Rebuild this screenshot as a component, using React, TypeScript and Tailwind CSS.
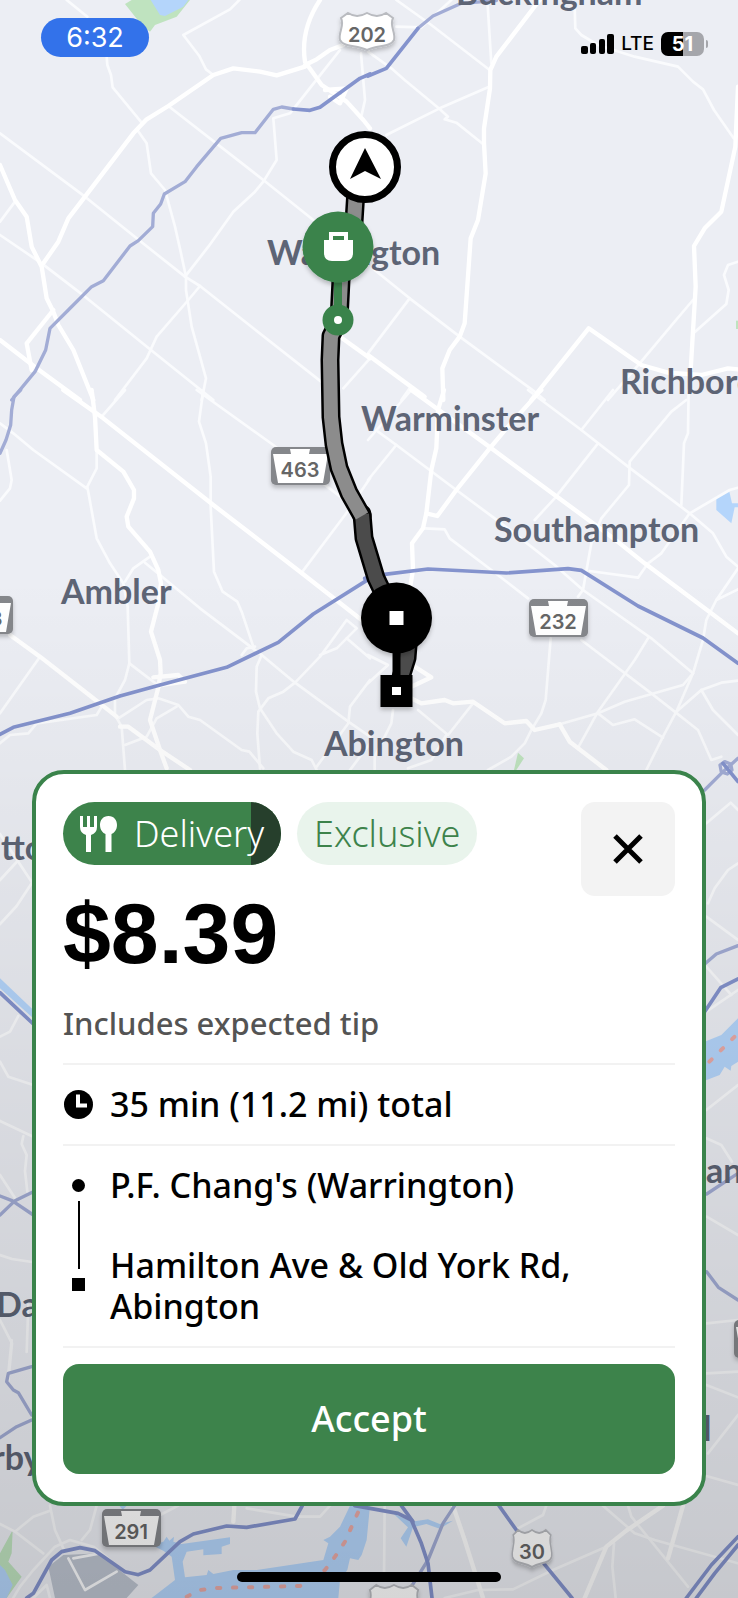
import React from 'react';

type Tile = {
  x: number;
  y: number;
  parks?: string[];
  water?: string[];
  grey?: string[];
  minor?: string[];
  major?: string[];
  highway?: string[];
  highwayDark?: string[];
  ferry?: string[];
};

// Map geometry, three units per screen pixel inside every tile
const TILES: Tile[] = [
  {
    x: 0,
    y: 0,
    parks: ['M375 12L395 0L570 0L530 50L465 75L450 95L425 75Z'],
    water: ['M452 0L480 45L495 48L550 20L565 0Z'],
    minor: [
      'M200 0L262 50',
      'M320 170L322 195L333 225L338 262L425 368M412 390L440 430L453 520L495 570L525 680L543 760L558 830L558 870L575 980L600 1070L618 1135L605 1200',
      'M718 0L690 28L550 105L598 168L618 208L640 225',
      'M505 318L790 540L940 660',
      'M1020 150L945 245L870 340L820 355L830 480L790 545L765 575L700 635L625 740L555 830',
      'M0 400L255 590L410 715L555 830L600 858L760 985L970 1150',
      'M0 705L125 790L255 890L450 1048L640 1200',
      'M0 665L45 605',
      'M600 858L565 900L470 1010L440 1075L345 1200',
      'M1110 1075L1030 1165',
      'M1083 160L1095 300L1085 345',
    ],
    major: [
      'M915 200L830 226L780 215L700 205L640 225L505 318L440 358L400 400L345 472L255 590L205 655L175 725L130 790',
      'M960 0C920 60 905 120 915 185L965 255L1040 305L1090 360L1110 385',
      'M915 195L950 178L990 150L1030 135',
      'M0 495L45 600L80 650L95 740L125 800L140 895L160 935L175 975L220 1050L280 1200',
      'M160 930L80 1030L95 1110',
      'M0 1020L110 1105L240 1200',
      'M1020 1010L1110 1075',
      'M975 270L1040 265L1020 310L990 290',
    ],
    highway: [
      'M35 1200L105 1115L137 1050L150 985L205 930L275 860L310 842L390 738L415 722L458 680L460 640L482 612L493 582L555 545L590 500L662 415L725 398L765 398L820 328L845 321L880 327',
    ],
    highwayDark: ['M880 327L930 331L960 322L1080 235L1110 222'],
  },
  {
    x: 368,
    y: 0,
    parks: ['M1104 962h6v25h-6z'],
    minor: [
      'M85 0L190 75L365 210',
      'M85 80L160 82L250 0',
      'M0 155L70 205L110 240L215 327L240 350L230 358L265 368L345 432',
      'M55 405L215 325L360 262',
      'M358 0L370 190',
      'M620 20L622 85L640 105L690 135L800 170L930 200L975 245L1005 268L1038 330L1097 415',
      'M1110 785L1080 795L1068 825L1082 870L1075 912L978 998',
      'M975 900L920 965L815 1090L720 1200',
      'M20 810L125 895L275 1010L500 1175L530 1200',
      'M125 895L0 1060',
      'M125 1165L100 1200',
    ],
    major: [
      'M515 0L385 170L367 210L366 265L348 385L348 430L353 520L330 660L308 715L290 970L275 1010L245 1050L223 1105L226 1200',
      'M1110 260L1102 440L1060 635L1010 685L978 738L983 860L968 1110',
      'M0 1065L170 1190',
      'M490 1200L662 985L820 1095L900 1118L1000 1125L1080 1105L1110 1108',
    ],
    highway: ['M150 85L195 48L280 10L385 2'],
    highwayDark: ['M0 228L55 205L150 85'],
  },
  {
    x: 0,
    y: 390,
    minor: [
      'M305 80L375 0',
      'M0 100L40 130L100 180L260 295',
      'M290 180L290 235L262 290L290 445L330 520L370 580L383 650L388 820L375 870L345 925L345 975',
      'M20 180L35 270L30 295L0 332',
      'M610 0L597 95L618 160L632 260L632 350L642 545L668 605L712 635L725 665L760 770',
      'M590 0L820 165L1040 335',
      'M450 500L400 535L375 575',
      'M435 518L480 555L600 655L785 795L885 878L1045 995L1110 1040',
      'M905 548L1035 375L1110 265',
      'M120 800L0 970',
      'M0 1060L30 1035L85 1030L110 1000L290 975L305 950',
      'M388 820L440 860L480 890',
      'M355 985L440 930L475 925L535 945L565 980L600 990L725 1080L748 1085L790 1135',
      'M345 975L365 1010L375 1140',
      'M375 1065L440 1040L470 985L530 950',
      'M785 795L770 830L768 905L780 955L830 1030L880 1085L935 1110L950 1140',
      'M780 1135L772 1030L775 965L805 925L850 905L885 878L960 800L1040 690L1070 715L1010 775L960 795',
      'M1040 745L1110 805',
      'M1110 870L1050 950L1045 1000L950 1130',
      'M1050 1140L1110 1060',
      'M725 795L740 775L765 770',
    ],
    major: [
      'M275 0L285 80L290 180L370 245L402 300L402 325L380 380L385 410L450 485L475 540L483 580L475 640L453 725L480 810L482 850L473 900L450 990L480 1080L500 1135',
      'M190 0L310 85L640 345L900 545L1085 690',
      'M30 735L120 800L280 925L350 980',
      'M360 1010L385 1010L480 1080L570 1140',
      'M460 862L535 855L555 875L480 885',
    ],
    highway: ['M62 0L42 20L35 60L32 105L18 150L0 190'],
    highwayDark: ['M0 1033L40 1012L210 970L360 918L480 885L680 832L835 757L940 672L1110 565'],
  },
  {
    x: 368,
    y: 390,
    parks: ['M450 1088L468 1105L445 1140L438 1140Z'],
    water: ['M1045 320L1083 300L1092 340L1110 340V352L1100 352L1090 400L1045 360Z'],
    minor: [
      'M480 0L640 120L780 230L965 370L1035 430L1075 500L1110 530',
      'M130 0L0 150',
      'M735 0L640 120',
      'M690 160L560 325L500 390',
      'M0 270L85 165',
      'M30 125L85 165L265 300L400 400L560 525L645 600L850 745L975 850',
      'M170 415L230 418L245 445L370 540L480 625',
      'M955 30L910 65L785 215L783 285L700 385L670 460L645 600L630 620',
      'M962 0L960 130L948 160L940 345',
      'M965 370L1085 300L1110 293',
      'M965 370L880 490L840 520L810 563L665 543',
      'M1110 535L1045 630L1110 598',
      'M1045 630L1015 690L1005 750L975 850L925 965L885 1040L835 1140',
      'M840 745L800 810L690 965L632 1070',
      'M640 750L850 910L920 965L990 1020L1030 1110L1060 1100',
      'M548 745L533 930L520 970L490 1020L470 1060L430 1100L360 1140',
      'M575 1003L690 970L770 935L945 885L975 850',
      'M690 970L735 1005L800 988L885 1043',
      'M925 965L1000 900L1060 878L1110 872',
      'M1000 900L1035 960L1110 1035',
      'M150 960L240 1035L315 940',
      'M75 960L70 1000L20 1100V1140',
      'M235 1035L190 1110L120 1135',
      'M0 795L60 825L0 880',
    ],
    major: [
      'M130 0L370 175L560 315L730 440L830 520L1030 670L1110 730',
      'M228 0L210 60L205 175L190 240L175 370L165 415L132 460L135 540L125 600',
      'M175 370L208 378L265 300L365 175L420 110L510 10L520 0',
      'M120 920L160 940L230 930L255 940L315 935L410 1000L475 993L500 1020L575 1003',
      'M575 1003L605 1055L715 1140',
      'M130 890L190 862L140 830',
    ],
    highway: ['M1010 1200L1060 1150L1110 1105', 'M1056 1125L1070 1115L1088 1122L1092 1140L1078 1152L1060 1146Z'],
    highwayDark: [
      'M-10 565L50 553L180 537L415 549L600 536L640 541L810 648L1005 744L1110 820',
      'M1065 1120L1110 1175',
    ],
  },
  {
    x: 368,
    y: 760,
    water: ['M1010 845L1060 825L1110 775V905L1090 918L1088 932L1070 920L1055 945L1010 962Z'],
    ferry: ['M1024 905L1110 820'],
    minor: [
      'M1015 190L1088 128L1110 150',
      'M1110 310L1080 330L1040 385L1020 430',
      'M1015 470L1110 540',
      'M1015 620L1090 705',
      'M1015 755L1110 690',
      'M1015 1050L1110 975',
      'M1015 1135L1060 1155L1092 1205',
      'M1016 1370L1110 1425',
      'M1016 1690L1110 1680',
      'M1015 1840L1110 1835',
      'M1015 1875L1110 1912',
      'M1020 2080L1110 1965',
      'M1015 2148L1110 2175',
    ],
    highway: ['M1010 612L1045 582L1110 557', 'M1016 1302L1110 1240', 'M1016 1535L1051 1582L1110 1620'],
    highwayDark: ['M1010 755L1058 683L1110 657'],
  },
  {
    x: 0,
    y: 780,
    water: ['M0 595L100 690V715L0 625Z'],
    minor: [
      'M0 162L95 306',
      'M0 300L50 246',
      'M0 432L50 378L95 310',
      'M0 770L30 755L55 708',
      'M0 845L25 890L100 915',
      'M0 1023L95 1068',
      'M70 1068L65 1092L80 1125L75 1173L82 1235',
      'M0 1185L45 1254',
      'M0 1425L36 1437L96 1446',
      'M0 1620L36 1690L25 1800',
      'M85 1575L80 1716',
    ],
    highway: ['M0 1248L36 1262L100 1305', 'M0 1305L45 1262L100 1235'],
    highwayDark: ['M0 638L100 732'],
  },
  {
    x: 0,
    y: 1340,
    parks: ['M38 570L35 640L25 665L65 710L20 774H0V640Z'],
    grey: ['M145 680L190 645L300 640L370 700L415 735L380 774H165Z'],
    water: [
      'M0 675L15 690L38 735L20 774H0Z',
      'M455 615L490 605L500 590L508 602L522 590L520 605L545 612L690 592V612L665 620V642L610 646V628L560 635L548 665L555 712L620 705L625 690L640 702L700 690L770 690L970 660L985 610L970 600L990 590L1020 560L1050 497H1110L1100 600L1085 645L1075 660L1050 655L1042 690L1020 720L1015 774H455L525 720L515 650L490 632Z',
      'M358 497h22l-12 12z',
    ],
    ferry: ['M560 770L600 750L650 744L900 738L975 690L1005 650L1035 605L1075 515'],
    minor: [
      'M150 497L165 570L190 625',
      'M290 497L270 570L245 600',
      'M35 0L25 100',
      'M480 525L535 497',
      'M740 505L890 530L960 530L990 497',
      'M0 552L45 575L100 530L150 512',
      'M45 575L130 640',
      'M30 790L60 740L100 690L165 620L210 600L280 620L330 660',
      'M205 655L255 750L350 695',
      'M100 774L140 735L150 774',
      'M220 655L300 640',
    ],
    major: ['M703 497L700 545'],
    highway: ['M95 80L25 100L20 125L40 150L55 158L95 225', 'M95 240L50 260L0 293'],
    highwayDark: [
      'M80 774L100 760L155 660L185 635L240 623L285 632L375 695L415 704L450 690L540 605L580 582L680 558L740 562L885 537L907 497',
    ],
  },
  {
    x: 368,
    y: 1340,
    water: ['M75 520L130 545L180 538L215 552L255 542L215 566L175 552L135 562L115 620L98 595L120 562Z'],
    minor: [
      'M50 497L48 720',
      'M535 497L525 525L450 565',
      'M705 497L800 580L860 600L1110 670',
      'M780 497L790 530L960 740',
      'M715 620L555 690L435 748L330 750L230 774',
      'M738 610L733 680L743 774',
    ],
    major: ['M255 497L290 600L345 774', 'M885 497L775 572L715 620L650 774', 'M945 497L900 655'],
    highway: ['M260 497L225 550L180 660L130 740'],
    highwayDark: [
      'M-40 497L90 520L130 540L160 610L180 670L192 774',
      'M100 497L135 545',
      'M393 497L445 570L535 680L612 774',
      'M1110 590L1030 675L955 774',
      'M1110 615L1040 700L985 774',
    ],
  },
];

const PLACES = [
  { name: 'Buckingham', x: 456, y: 5 },
  { name: 'Warrington', x: 267, y: 265 },
  { name: 'Warminster', x: 361, y: 431 },
  { name: 'Richboro', x: 620, y: 394 },
  { name: 'Southampton', x: 494, y: 542 },
  { name: 'Ambler', x: 61, y: 604 },
  { name: 'Abington', x: 324, y: 756 },
  { name: 'tto', x: 1, y: 860 },
  { name: 'Da', x: -4, y: 1317 },
  { name: 'rby', x: -8, y: 1470 },
  { name: 'an', x: 706, y: 1183 },
  { name: 'l', x: 703, y: 1441 },
];

const STATE_ROUTES = [
  { label: '463', x: 271, y: 447 },
  { label: '232', x: 529, y: 599 },
  { label: '463', x: -46, y: 596 },
  { label: '291', x: 102, y: 1509 },
  { label: '', x: 734, y: 1320 },
];

const US_ROUTES = [
  { label: '202', x: 338, y: 13, w: 58 },
  { label: '30', x: 511, y: 1530, w: 42 },
  { label: '', x: 367, y: 1585, w: 54 },
];

const TileLayer: React.FC<{ tile: Tile }> = ({ tile }) => (
  <g transform={`translate(${tile.x} ${tile.y}) scale(0.33333)`} strokeLinecap="round" strokeLinejoin="round">
    {tile.parks?.map((d) => <path key={d} d={d} fill="#bfe3bf" />)}
    {tile.grey?.map((d) => <path key={d} d={d} fill="#bdc4d0" />)}
    {tile.water?.map((d) => <path key={d} d={d} fill="#b4d5fb" />)}
    <g fill="none">
      {tile.ferry?.map((d) => <path key={d} d={d} stroke="#e8a9a6" strokeWidth="12" strokeDasharray="10 38" />)}
      {tile.minor?.map((d) => <path key={d} d={d} stroke="#fafbfd" strokeWidth="8" />)}
      {tile.major?.map((d) => <path key={d} d={d} stroke="#fff" strokeWidth="13" />)}
      {tile.highway?.map((d) => <path key={d} d={d} stroke="#a2acd5" strokeWidth="10" />)}
      {tile.highwayDark?.map((d) => <path key={d} d={d} stroke="#8493cd" strokeWidth="11" />)}
    </g>
  </g>
);

const RouteMap: React.FC = () => {
  const ROUTE = 'M356 190L354 222L341 280L339 320L331 336L330 360L331 417L334 444L339 468L349 493L362 516';
  const ROUTE_END = 'M362 514L364 538L376 578L396 620L408 645L407 658L397 690';

  return (
    <svg
      className="absolute inset-0 h-full w-full"
      viewBox="0 0 738 1598"
      preserveAspectRatio="xMidYMin slice"
      role="img"
      aria-label="Route map"
    >
      <defs>
        <linearGradient id="shade" x1="0" y1="0" x2="0" y2="1">
          <stop offset="0.36" stopColor="#000" stopOpacity="0" />
          <stop offset="1" stopColor="#000" stopOpacity="0.16" />
        </linearGradient>
        <filter id="drop" x="-20%" y="-20%" width="140%" height="150%">
          <feDropShadow dx="0" dy="3" stdDeviation="2" floodOpacity="0.22" />
        </filter>
      </defs>

      <rect width="738" height="1598" fill="#eceef4" />
      {TILES.map((tile) => <TileLayer key={`${tile.x}-${tile.y}`} tile={tile} />)}

      <g fill="#5d6475" fontFamily="Lato, sans-serif" fontWeight="700" fontSize="34">
        {PLACES.map((p) => <text key={p.name} x={p.x} y={p.y}>{p.name}</text>)}
      </g>

      {STATE_ROUTES.map((s) => (
        <g key={s.x} transform={`translate(${s.x} ${s.y})`}>
          <rect width="59" height="38" rx="5" fill="#85878b" filter="url(#drop)" />
          <path d="M2 7H20L19 2H39L38 7H57L52 36H7Z" fill="#fff" />
          <text x="29" y="30" textAnchor="middle" fontFamily="Inter, sans-serif" fontWeight="600" fontSize="20" fill="#666">
            {s.label}
          </text>
        </g>
      ))}

      {US_ROUTES.map((s) => (
        <g key={s.x} transform={`translate(${s.x} ${s.y})`}>
          <path
            transform={`scale(${s.w / 58} 1)`}
            d="M3 5L10 0C16 4 22 4 29 0C36 4 42 4 48 0L55 5C51 13 58 19 56 27C53 34 40 32 29 37C18 32 5 34 2 27C0 19 7 13 3 5Z"
            fill="#fff"
            stroke="#b9bbc0"
            strokeWidth="2"
            filter="url(#drop)"
          />
          <text x={s.w / 2} y="29" textAnchor="middle" fontFamily="Inter, sans-serif" fontWeight="600" fontSize="20" fill="#666">
            {s.label}
          </text>
        </g>
      ))}

      <rect width="738" height="1598" fill="url(#shade)" />

      <g fill="none" strokeLinejoin="round">
        <g strokeLinecap="round">
          <path d={ROUTE} stroke="#000" strokeWidth="19" />
          <path d={ROUTE_END} stroke="#000" strokeWidth="19" />
        </g>
        <path d={ROUTE_END} stroke="#4b4b4b" strokeWidth="14" />
        <path d={ROUTE} stroke="#8c8c8c" strokeWidth="14" />
      </g>

      {/* current position */}
      <circle cx="365" cy="167" r="32.500" fill="#fff" stroke="#000" strokeWidth="7" />
      <path d="M365 148L381 179L365 171L350 179Z" />

      {/* pickup */}
      <path d="M338 270V312" stroke="#3a834b" strokeWidth="8" />
      <circle cx="338" cy="247" r="35.500" fill="#3a834b" filter="url(#drop)" />
      <path d="M324 240H329V232H348V240H353V253Q353 261 345 261H332Q324 261 324 253ZM333 236V240H344V236Z" fill="#fff" fillRule="evenodd" />
      <circle cx="338" cy="320" r="15.500" fill="#3a834b" />
      <circle cx="338" cy="320" r="4" fill="#fff" />

      {/* drop-off */}
      <path d="M396.500 645V680" stroke="#000" strokeWidth="8" />
      <circle cx="396.500" cy="618" r="35.500" filter="url(#drop)" />
      <rect x="389.500" y="611" width="14" height="14" fill="#fff" />
      <rect x="380.500" y="675" width="32" height="32" filter="url(#drop)" />
      <rect x="392" y="687" width="9" height="8" fill="#fff" />
    </svg>
  );
};

const StatusBar: React.FC = () => (
  <header className="relative flex items-start justify-between pl-[41px] pr-[30px] pt-[18px] font-['Inter',sans-serif]">
    <div className="flex h-[39px] w-[108px] items-center justify-center rounded-full bg-[#3372ea] pt-0.5 text-[27px] text-white">6:32</div>
    <div className="mt-3.5 flex h-6 items-center gap-[7px]">
      <svg className="h-5 w-[33px]" viewBox="0 0 33 20" aria-label="Signal">
        <rect x="0" y="12" width="7" height="8" rx="2" />
        <rect x="9" y="9" width="6" height="11" rx="2" />
        <rect x="18" y="5" width="6" height="15" rx="2" />
        <rect x="26" y="0" width="7" height="20" rx="2" />
      </svg>
      <span className="text-[19px] font-medium leading-6">LTE</span>
      <div className="flex items-center gap-0.5">
        <div className="flex h-6 w-[43px] items-center justify-center rounded-[7px] bg-[linear-gradient(90deg,#000_51%,#a5a6ab_51%)] text-[20px] font-bold leading-6 text-white">
          51
        </div>
        <span className="h-2 w-0.5 rounded-r-full bg-[#a5a6ab]"></span>
      </div>
    </div>
  </header>
);

const OfferCard: React.FC = () => (
  <main className="relative mx-8 mt-auto rounded-[32px] border-4 border-[#3a834b] bg-white px-[27px] py-7">
    <div className="flex items-start justify-between">
      <div>
        <div className="flex gap-4 text-[36px] font-light">
          <div className="relative flex h-[63px] items-center gap-[17px] overflow-hidden rounded-full bg-[#3d834b] px-[17px] text-white">
            <span className="absolute inset-y-0 right-0 w-[30px] bg-[#263f2c]"></span>
            <svg className="relative h-9 w-[37px]" viewBox="0 0 37 36" fill="#fff" aria-hidden="true">
              <path d="M0 0H3V11H7V0H10V11H14V0H17V11Q17 17 11 19V36H6V19Q0 17 0 11Z" />
              <path d="M28.500 0C34 0 37 4 37 9C37 14 34 17 31.500 18V36H25.500V18C23 17 20 14 20 9C20 4 23 0 28.500 0Z" />
            </svg>
            <span className="relative">Delivery</span>
          </div>
          <div className="flex h-[63px] items-center rounded-full bg-[#e9f4ec] px-[17px] text-[#3d834b]">Exclusive</div>
        </div>
        <h1 className="mt-5 font-['Liberation_Sans',sans-serif] text-[86px] font-bold leading-[96px]">$8.39</h1>
      </div>
      <button
        type="button"
        aria-label="Decline"
        className="flex size-[94px] items-center justify-center rounded-[14px] bg-[#f3f3f3]"
      >
        <svg className="size-[30px]" viewBox="0 0 30 30" stroke="#000" strokeWidth="5" aria-hidden="true">
          <path d="M2 2L28 28M28 2L2 28" />
        </svg>
      </button>
    </div>
    <p className="mt-[22px] pb-5 text-[31px] font-medium leading-10 text-[#545454]">Includes expected tip</p>

    <div className="flex h-[81px] items-center gap-4 border-t-2 border-[#f2f2f2] text-[34px] font-medium leading-[41px]">
      <svg className="h-[29px] w-[31px]" viewBox="0 0 31 29" aria-hidden="true">
        <circle cx="15.500" cy="14.500" r="14.500" />
        <path d="M15 4.500V15.500H24" fill="none" stroke="#fff" strokeWidth="4" />
      </svg>
      <span>35 min (11.2 mi) total</span>
    </div>

    <div className="flex gap-4 border-y-2 border-[#f2f2f2] py-[19px] text-[34px] font-medium leading-[41px]">
      <div className="flex w-[31px] shrink-0 flex-col items-center gap-[9px] pt-3.5">
        <span className="size-[13px] rounded-full bg-black"></span>
        <span className="h-[68px] w-0.5 bg-black"></span>
        <span className="size-[13px] bg-black"></span>
      </div>
      <div className="flex flex-col gap-[39px]">
        <p>P.F. Chang's (Warrington)</p>
        <p>
          Hamilton Ave &amp; Old York Rd,
          <br />
          Abington
        </p>
      </div>
    </div>

    <button type="button" className="mt-4 h-[110px] w-full rounded-2xl bg-[#3d834b] text-[36px] font-medium text-white">
      Accept
    </button>
  </main>
);

const App: React.FC = () => {
  return (
    <div className="relative flex min-h-screen flex-col overflow-hidden font-['Noto_Sans',sans-serif] text-black">
      <RouteMap />
      <StatusBar />
      <OfferCard />
      <div className="relative mx-auto mb-4 mt-[66px] h-2.5 w-[264px] rounded-full bg-black"></div>
    </div>
  );
};

export default App;
